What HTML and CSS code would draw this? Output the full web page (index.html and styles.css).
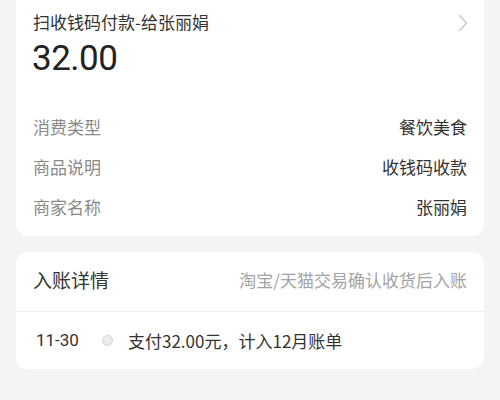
FILE: index.html
```html
<!DOCTYPE html>
<html lang="zh-CN">
<head>
<meta charset="utf-8">
<link rel="stylesheet" href="styles.css">
</head>
<body>
<div class="page">
  <section class="card card-top">
    <div class="title-row">
      <span class="title">扫收钱码付款-给张丽娟</span>
      <svg class="chev" width="10" height="18" viewBox="0 0 10 18"><path d="M1.5 1.5 L8.5 9 L1.5 16.5" fill="none" stroke="#c9c9c9" stroke-width="1.4" stroke-linecap="round" stroke-linejoin="round"/></svg>
    </div>
    <div class="amount">32.00</div>
    <div class="info">
      <div class="info-row"><span class="label">消费类型</span><span class="value">餐饮美食</span></div>
      <div class="info-row"><span class="label">商品说明</span><span class="value">收钱码收款</span></div>
      <div class="info-row"><span class="label">商家名称</span><span class="value">张丽娟</span></div>
    </div>
  </section>
  <section class="card card-bill">
    <div class="bill-head">
      <span class="bill-title">入账详情</span>
      <span class="bill-note">淘宝/天猫交易确认收货后入账</span>
    </div>
    <div class="bill-row">
      <span class="date">11-30</span>
      <span class="dot"></span>
      <span class="desc">支付32.00元，计入12月账单</span>
    </div>
  </section>
</div>
</body>
</html>
```
FILE: styles.css
```css
html, body {
  margin: 0;
  padding: 0;
  background: #f4f4f4;
}
body {
  font-family: "Noto Sans CJK SC", "Noto Sans", sans-serif;
  width: 500px;
  height: 400px;
  overflow: hidden;
}
.page {
  display: flex;
  flex-direction: column;
  gap: 16px;
  padding: 0 16px;
}
.card {
  background: #fff;
  border-radius: 12px;
}
.card-top {
  border-radius: 0 0 12px 12px;
  padding: 10px 17px 10px 17px;
}
.title-row {
  display: flex;
  justify-content: space-between;
  align-items: center;
  height: 24px;
}
.title {
  font-size: 17px;
  line-height: 24px;
  color: #333;
}
.chev {
  display: block;
  margin-right: -1px;
  margin-top: 1px;
}
.amount {
  font-family: Roboto, "Liberation Sans", sans-serif;
  font-weight: 400;
  font-size: 35px;
  line-height: 40px;
  color: #222;
  margin-top: 5px;
  margin-left: -1px;
  letter-spacing: -0.5px;
}
.info {
  margin-top: 27px;
  display: flex;
  flex-direction: column;
}
.info-row {
  display: flex;
  justify-content: space-between;
  align-items: center;
  height: 40px;
  font-size: 17px;
}
.label {
  color: #8a8a8a;
}
.value {
  color: #333;
}
.card-bill {
  display: flex;
  flex-direction: column;
}
.bill-head {
  box-sizing: border-box;
  height: 60px;
  display: flex;
  justify-content: space-between;
  align-items: center;
  padding: 0 17px 5px 17px;
  border-bottom: 1px solid #efefef;
}
.bill-title {
  font-size: 19px;
  color: #333;
}
.bill-note {
  font-size: 17px;
  color: #a3a3a3;
}
.bill-row {
  box-sizing: border-box;
  height: 57px;
  display: flex;
  align-items: center;
  padding: 0 20px 1px 20px;
}
.date {
  font-family: Roboto, "Liberation Sans", sans-serif;
  font-size: 17px;
  color: #333;
  width: 66px;
}
.dot {
  width: 9px;
  height: 9px;
  border-radius: 50%;
  background: #ececec;
  border: 1px solid #d2d2d2;
  margin-right: 15px;
}
.desc {
  font-size: 17px;
  color: #333;
}
```
